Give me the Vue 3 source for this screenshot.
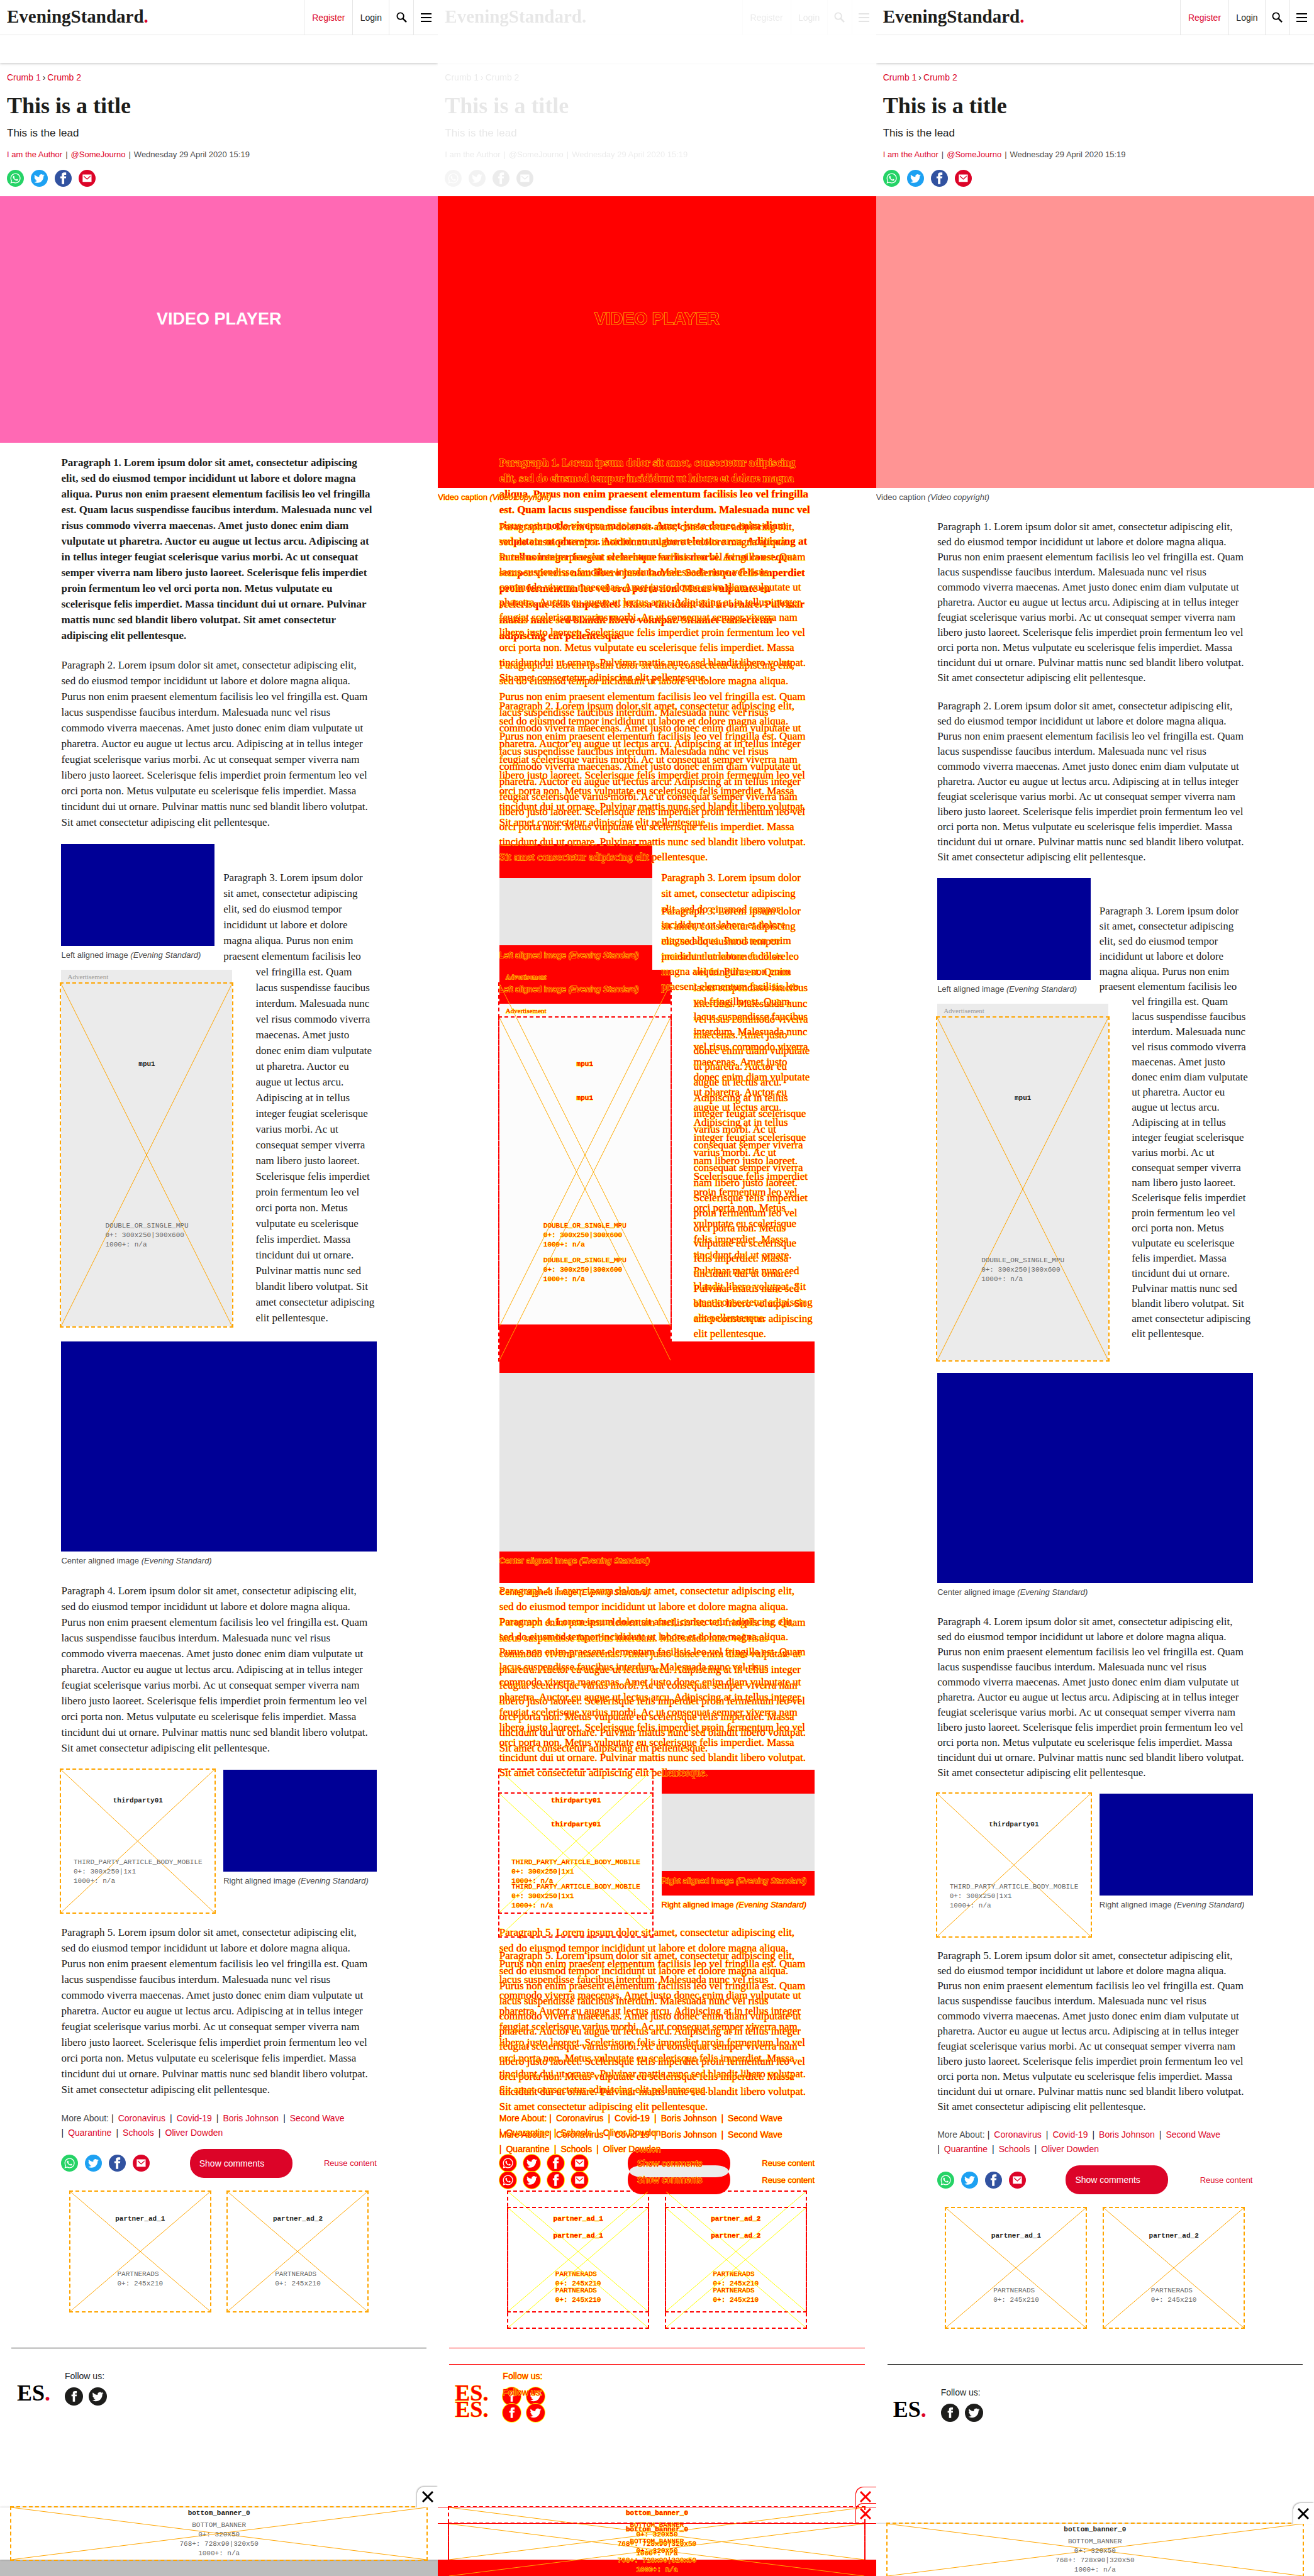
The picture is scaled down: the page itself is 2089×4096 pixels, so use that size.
<script setup>
const lorem =
  'Lorem ipsum dolor sit amet, consectetur adipiscing elit, sed do eiusmod tempor incididunt ut labore et dolore magna aliqua. Purus non enim praesent elementum facilisis leo vel fringilla est. Quam lacus suspendisse faucibus interdum. Malesuada nunc vel risus commodo viverra maecenas. Amet justo donec enim diam vulputate ut pharetra. Auctor eu augue ut lectus arcu. Adipiscing at in tellus integer feugiat scelerisque varius morbi. Ac ut consequat semper viverra nam libero justo laoreet. Scelerisque felis imperdiet proin fermentum leo vel orci porta non. Metus vulputate eu scelerisque felis imperdiet. Massa tincidunt dui ut ornare. Pulvinar mattis nunc sed blandit libero volutpat. Sit amet consectetur adipiscing elit pellentesque.'

const panels = [
  { name: 'baseline', layers: ['before'] },
  { name: 'diff', layers: ['before', 'after'] },
  { name: 'current', layers: ['after'] }
]

const tags = ['Coronavirus', 'Covid-19', 'Boris Johnson', 'Second Wave', 'Quarantine', 'Schools', 'Oliver Dowden']
const partners = ['partner_ad_1', 'partner_ad_2']

const twitter =
  'M23.953 4.57a10 10 0 01-2.825.775 4.958 4.958 0 002.163-2.723c-.951.555-2.005.959-3.127 1.184a4.92 4.92 0 00-8.384 4.482C7.69 8.095 4.067 6.13 1.64 3.162a4.822 4.822 0 00-.666 2.475c0 1.71.87 3.213 2.188 4.096a4.904 4.904 0 01-2.228-.616v.06a4.923 4.923 0 003.946 4.827 4.996 4.996 0 01-2.212.085 4.936 4.936 0 004.604 3.417 9.867 9.867 0 01-6.102 2.105c-.39 0-.779-.023-1.17-.067a13.995 13.995 0 007.557 2.209c9.053 0 13.998-7.496 13.998-13.985 0-.21 0-.42-.015-.63A9.935 9.935 0 0024 4.59z'
const facebook =
  'M9 8h-3v4h3v12h5v-12h3.642l.358-4h-4v-1.667c0-.955.192-1.333 1.115-1.333h2.885v-5h-3.808c-3.596 0-5.192 1.583-5.192 4.615v3.385z'
const whatsapp =
  'M.057 24l1.687-6.163c-1.041-1.804-1.588-3.849-1.587-5.946.003-6.556 5.338-11.891 11.893-11.891 3.181.001 6.167 1.24 8.413 3.488 2.245 2.248 3.481 5.236 3.48 8.414-.003 6.557-5.338 11.892-11.893 11.892-1.99-.001-3.951-.5-5.688-1.448l-6.305 1.654zm6.597-3.807c1.676.995 3.276 1.591 5.392 1.592 5.448 0 9.886-4.434 9.889-9.885.002-5.462-4.415-9.89-9.881-9.892-5.452 0-9.887 4.434-9.889 9.884-.001 2.225.651 3.891 1.746 5.634l-.999 3.648 3.742-.981zm11.387-5.464c-.074-.124-.272-.198-.57-.347-.297-.149-1.758-.868-2.031-.967-.272-.099-.47-.149-.669.149-.198.297-.768.967-.941 1.165-.173.198-.347.223-.644.074-.297-.149-1.255-.462-2.39-1.475-.883-.788-1.48-1.761-1.653-2.059-.173-.297-.018-.458.13-.606.134-.133.297-.347.446-.521.151-.172.2-.296.3-.495.099-.198.05-.372-.025-.521-.075-.148-.669-1.611-.916-2.206-.242-.579-.487-.501-.669-.51l-.57-.01c-.198 0-.52.074-.792.372s-1.04 1.016-1.04 2.479 1.065 2.876 1.213 3.074c.149.198 2.095 3.2 5.076 4.487.709.306 1.263.489 1.694.626.712.226 1.36.194 1.872.118.571-.085 1.758-.719 2.006-1.413.248-.695.248-1.29.173-1.414z'
const mail = 'M0 2h24v20H0z M3 5l9 8 9-8v3l-9 8-9-8z'

const shares = [
  { id: 'whatsapp', label: 'Share on WhatsApp', path: whatsapp, shift: 'translate(6.500 6.500) scale(.8)' },
  { id: 'twitter', label: 'Share on Twitter', path: twitter, shift: 'translate(6 6.500) scale(.83)' },
  { id: 'facebook', label: 'Share on Facebook', path: facebook, shift: 'translate(5 5) scale(.92)' },
  { id: 'mail', label: 'Share by email', path: mail, shift: 'translate(7.500 7.500) scale(.7)' }
]
const follows = [
  { id: 'dark', label: 'Facebook', path: facebook, shift: 'translate(7 6.500) scale(.78)' },
  { id: 'dark', label: 'Twitter', path: twitter, shift: 'translate(6 6.500) scale(.83)' }
]
</script>

<template>
  <main class="compare">
    <section v-for="panel in panels" :key="panel.name" class="panel" :class="panel.name">
      <div v-for="v in panel.layers" :key="v" class="layer" :class="v">
        <div class="top">
          <header>
            <div class="bar">
              <a href="#" class="logo">EveningStandard<span>.</span></a>
              <nav>
                <a href="#" class="cell">Register</a>
                <a href="#" class="cell login">Login</a>
                <button type="button" class="cell icon" aria-label="Search">
                  <svg width="17" height="17" viewBox="0 0 18 18" fill="none" stroke="currentColor">
                    <circle cx="7" cy="7" r="5.500" stroke-width="2" />
                    <path d="M11 11l6 6" stroke-width="2.500" />
                  </svg>
                </button>
                <button type="button" class="cell icon" aria-label="Menu">
                  <svg width="17" height="14" viewBox="0 0 17 14" stroke="currentColor" stroke-width="2">
                    <path d="M0 1h17M0 7h17M0 13h17" />
                  </svg>
                </button>
              </nav>
            </div>
          </header>
          <div class="intro">
            <div class="crumbs"><a href="#">Crumb 1</a><i>›</i><a href="#">Crumb 2</a></div>
            <h1>This is a title</h1>
            <div class="lead">This is the lead</div>
            <div class="byline">
              <a href="#">I am the Author</a><i>|</i><a href="#">@SomeJourno</a><i>|</i><span>Wednesday 29 April 2020 15:19</span>
            </div>
            <div class="shares">
              <a v-for="s in shares" :key="s.id" href="#" class="round" :class="s.id" :aria-label="s.label">
                <svg viewBox="0 0 32 32"><path :d="s.path" :transform="s.shift" fill="#fff" fill-rule="evenodd" /></svg>
              </a>
            </div>
          </div>
        </div>

        <div class="video"><span v-if="v === 'before'" class="ink">VIDEO PLAYER</span></div>
        <div v-if="v === 'after'" class="caption videocap ink">Video caption <em>(Video copyright)</em></div>

        <article>
          <p class="ink first">Paragraph 1. {{ lorem }}</p>
          <p class="ink">Paragraph 2. {{ lorem }}</p>
          <div class="wrap">
            <figure class="left">
              <div class="image"></div>
              <figcaption class="caption ink">Left aligned image <em>(Evening Standard)</em></figcaption>
            </figure>
            <aside class="mpu">
              <div class="adlabel ink">Advertisement</div>
              <div class="slot">
                <svg preserveAspectRatio="none" viewBox="0 0 100 100"><path d="M0 0L100 100M100 0L0 100" vector-effect="non-scaling-stroke" /></svg>
                <strong class="ink">mpu1</strong>
                <pre class="ink">DOUBLE_OR_SINGLE_MPU
0+: 300x250|300x600
1000+: n/a</pre>
              </div>
            </aside>
            <p class="ink">Paragraph 3. {{ lorem }}</p>
          </div>
          <figure class="center">
            <div class="image"></div>
            <figcaption class="caption ink">Center aligned image <em>(Evening Standard)</em></figcaption>
          </figure>
          <p class="ink">Paragraph 4. {{ lorem }}</p>
          <div class="pair">
            <div class="slot">
              <svg preserveAspectRatio="none" viewBox="0 0 100 100"><path d="M0 0L100 100M100 0L0 100" vector-effect="non-scaling-stroke" /></svg>
              <strong class="ink">thirdparty01</strong>
              <pre class="ink">THIRD_PARTY_ARTICLE_BODY_MOBILE
0+: 300x250|1x1
1000+: n/a</pre>
            </div>
            <figure class="right">
              <div class="image"></div>
              <figcaption class="caption ink">Right aligned image <em>(Evening Standard)</em></figcaption>
            </figure>
          </div>
          <p class="ink">Paragraph 5. {{ lorem }}</p>

          <ul class="tags ink">
            <li class="about"><span>More About:</span></li>
            <li v-for="t in tags" :key="t"><i>|</i><a href="#">{{ t }}</a></li>
          </ul>
          <div class="actions">
            <div class="shares">
              <a v-for="s in shares" :key="s.id" href="#" class="round" :class="s.id" :aria-label="s.label">
                <svg viewBox="0 0 32 32"><path :d="s.path" :transform="s.shift" fill="#fff" fill-rule="evenodd" /></svg>
              </a>
            </div>
            <button type="button" class="comments"><span class="ink">Show comments</span></button>
            <a href="#" class="reuse ink">Reuse content</a>
          </div>
          <div class="partners">
            <div v-for="p in partners" :key="p" class="slot">
              <svg preserveAspectRatio="none" viewBox="0 0 100 100"><path d="M0 0L100 100M100 0L0 100" vector-effect="non-scaling-stroke" /></svg>
              <strong class="ink">{{ p }}</strong>
              <pre class="ink">PARTNERADS
0+: 245x210</pre>
            </div>
          </div>
        </article>

        <footer>
          <a href="#" class="es ink">ES<span>.</span></a>
          <div class="follow">
            <div class="ink">Follow us:</div>
            <div class="followicons">
              <a v-for="f in follows" :key="f.label" href="#" class="round" :class="f.id" :aria-label="f.label">
                <svg viewBox="0 0 32 32"><path :d="f.path" :transform="f.shift" fill="#fff" /></svg>
              </a>
            </div>
          </div>
        </footer>

        <div class="banner">
          <button type="button" class="close" aria-label="Close">
            <svg width="18" height="18" viewBox="0 0 18 18" stroke="currentColor" stroke-width="3"><path d="M1 1l16 16M17 1L1 17" /></svg>
          </button>
          <div class="slot">
            <svg preserveAspectRatio="none" viewBox="0 0 100 100"><path d="M0 0L100 100M100 0L0 100" vector-effect="non-scaling-stroke" /></svg>
            <strong class="ink">bottom_banner_0</strong>
            <pre class="ink">BOTTOM_BANNER
0+: 320x50
768+: 728x90|320x50
1000+: n/a</pre>
          </div>
        </div>
        <div class="filler"></div>
      </div>
    </section>
  </main>
</template>

<style>
body {
  margin: 0;
  background: #fff;
}
</style>

<style scoped>
.compare {
  display: grid;
  grid-template-columns: repeat(3, minmax(0, 1fr));
  font-family: 'Liberation Sans', Arial, sans-serif;
  color: #1d1d1b;
  overflow: hidden;
}
.panel {
  display: grid;
  overflow: hidden;
}
.layer {
  grid-area: 1 / 1;
  min-width: 0;
  display: flex;
  flex-direction: column;
  --line: 25px;
  --gap: 22px;
}
.after {
  --line: 24px;
  --gap: 21px;
}
a {
  color: #dc0428;
  text-decoration: none;
}
button {
  font: inherit;
  border: 0;
  background: none;
  color: #000;
  padding: 0;
}
i {
  font-style: normal;
}

header {
  height: 100px;
  box-shadow: 0 1px 4px rgba(0, 0, 0, 0.25);
}
.bar {
  display: flex;
  justify-content: space-between;
  height: 55px;
  border-bottom: 1px solid #e6e6e6;
}
.logo {
  font: bold 29px/52px 'Liberation Serif', 'Times New Roman', serif;
  color: #1d1d1b;
  padding-left: 11px;
}
.logo span,
.es span {
  color: #dc0428;
}
nav {
  display: flex;
  font-size: 14px;
}
.cell {
  display: flex;
  align-items: center;
  justify-content: center;
  box-sizing: border-box;
  border-left: 1px solid #e6e6e6;
  width: 77px;
}
.cell.login {
  width: 58px;
  color: #1d1d1b;
}
.cell.icon {
  width: 39px;
}
.intro {
  padding: 13px 11px 15px;
}
.crumbs {
  display: flex;
  gap: 3px;
  font-size: 14px;
  line-height: 20px;
}
h1 {
  margin: 13px 0 10px;
  font: bold 36px/44px 'Liberation Serif', 'Times New Roman', serif;
}
.lead {
  font-size: 17px;
  line-height: 24px;
}
.byline {
  margin: 12px 0 14px;
  display: flex;
  gap: 5px;
  font-size: 13px;
  line-height: 20px;
  color: #4a4a4a;
}
.shares {
  display: flex;
  gap: 11px;
}
.round {
  width: 27px;
  height: 27px;
  border-radius: 50%;
}
.round svg {
  display: block;
  width: 100%;
  height: 100%;
}
.whatsapp { background: #25d366; }
.twitter { background: #1da1f2; }
.facebook { background: #3152a0; }
.mail { background: #dc0428; }
.dark { background: #1d1d1b; }

.video {
  display: flex;
  align-items: center;
  justify-content: center;
  aspect-ratio: 16 / 9;
  background: #ff69b4;
  color: #fff;
  font-size: 27px;
  font-weight: bold;
}
.after .video {
  aspect-ratio: 3 / 2;
  background: #ff9494;
}
.caption {
  padding-top: 7px;
  font-size: 13px;
  line-height: 16px;
  color: #4a4a4a;
}
.videocap {
  padding-bottom: 8px;
}

article {
  padding: 19px 14% 0;
}
p {
  margin: 0 0 var(--gap);
  padding-right: 12px;
  font: 17px/var(--line) 'Liberation Serif', 'Times New Roman', serif;
}
.before .first {
  padding-right: 5px;
  font-weight: bold;
}
figure {
  margin: 0;
}
.image {
  background: #000096;
  aspect-ratio: 3 / 2;
}
.wrap {
  display: flow-root;
  padding-bottom: 24px;
}
.after .wrap {
  padding-bottom: 20px;
}
.wrap p {
  margin: 0;
  padding: 41px 3px 0 0;
}
.left {
  float: left;
  width: calc(50% - 7px);
  height: 200px;
  padding-right: 14px;
}
.left .image,
.right .image {
  height: 162px;
  aspect-ratio: auto;
}
.mpu {
  float: left;
  clear: left;
  width: 272px;
  margin-right: 37px;
  background: #ebebeb;
}
.adlabel {
  padding-left: 10px;
  font: 11px/22px 'Liberation Serif', 'Times New Roman', serif;
  color: #9a9a9a;
}
.slot {
  position: relative;
  display: flex;
  flex-direction: column;
  align-items: center;
  justify-content: space-around;
  outline: 2px dashed #ffa500;
  font: 11px/15px 'Liberation Mono', 'Courier New', monospace;
}
.slot svg {
  position: absolute;
  inset: 0;
  width: 100%;
  height: 100%;
}
.slot path {
  stroke: #ffa500;
  stroke-width: 1px;
}
.slot strong,
.slot pre {
  position: relative;
}
.slot strong {
  text-shadow: 0 0 2px #fff;
}
.slot pre {
  margin: 0;
  font: inherit;
  color: #666;
}
.mpu .slot {
  height: 545px;
}
.center {
  margin-bottom: 27px;
}
.pair {
  display: flex;
  justify-content: space-between;
  margin-bottom: 19px;
}
.pair > * {
  width: calc(50% - 7px);
}
.pair .slot {
  height: 227px;
}

.tags {
  display: flex;
  flex-wrap: wrap;
  margin: 0 0 14px;
  padding: 0;
  list-style: none;
  font-size: 14px;
  line-height: 23px;
}
.tags li {
  margin-right: 7px;
}
.tags .about {
  margin-right: 4px;
}
.about span {
  color: #4a4a4a;
}
.tags i {
  margin-right: 7px;
}
.actions {
  display: flex;
  align-items: center;
  justify-content: space-between;
  height: 46px;
  margin-bottom: 22px;
}
.actions .shares {
  width: 154px;
}
.comments {
  position: relative;
  width: 163px;
  height: 46px;
  padding-left: 15px;
  border-radius: 22px;
  background: #dc0428;
  color: #fff;
  font-size: 14px;
  text-align: left;
}
.reuse {
  font-size: 13px;
}
.partners {
  display: flex;
  justify-content: space-around;
}
.partners .slot {
  width: 222px;
  height: 190px;
}

footer {
  display: flex;
  margin: 58px 18px 0;
  padding: 35px 9px 162px;
  border-top: 1px solid #1d1d1b;
}
.es {
  margin-top: 17px;
  width: 76px;
  font: bold 36px/38px 'Liberation Serif', 'Times New Roman', serif;
  color: #000;
}
.follow {
  font-size: 14px;
  line-height: 18px;
}
.followicons {
  display: flex;
  gap: 9px;
  margin-top: 9px;
}
.followicons .round {
  width: 29px;
  height: 29px;
}

.banner {
  position: relative;
  background: #fff;
  box-shadow: 0 0 3px rgba(0, 0, 0, 0.3);
}
.banner .slot {
  max-width: 660px;
  height: 83px;
  margin: 0 auto;
  text-align: center;
}
.close {
  position: absolute;
  z-index: 2;
  right: 0;
  bottom: 100%;
  display: flex;
  align-items: center;
  justify-content: center;
  width: 33px;
  height: 33px;
  border-radius: 12px 0 0 0;
  background: #fff;
  box-shadow: -1px -1px 2px rgba(0, 0, 0, 0.3);
}
.filler {
  flex: 1;
  background: #bdbdbd;
}

/* Diff panel: unchanged parts are faded, changed ones are red with a yellow edge */
.diff .top {
  filter: grayscale(1);
  opacity: 0.1;
}
.diff .after .top {
  visibility: hidden;
}
.diff .video,
.diff .image,
.diff .mpu,
.diff .comments,
.diff .filler {
  background: #f00;
}
.diff .ink,
.diff .ink a,
.diff .ink span {
  color: #f00;
  text-shadow: none;
  -webkit-text-stroke: 1px #ff0;
  paint-order: stroke fill;
}
.diff .ink {
  position: relative;
  z-index: 1;
}
.diff .after .left .image {
  background: linear-gradient(#e6e6e6 66%, #f00 66%);
}
.diff .after .center .image {
  background: linear-gradient(#e6e6e6 85%, #f00 85%);
}
.diff .after .right .image {
  background: linear-gradient(#e6e6e6 76%, #f00 76%);
}
.diff .after .mpu {
  background: linear-gradient(#fcfcfc 90%, #f00 90%);
}
.diff .slot {
  z-index: 1;
  outline-color: #f00;
}
.diff .slot path {
  stroke: #ff0;
}
.diff .mpu .slot path,
.diff .banner .slot path {
  stroke: #fa0;
}
.diff article .round,
.diff footer .round {
  background: #f00;
  box-shadow: 0 0 0 1px #ff0;
}
.diff .after .comments::before {
  content: '';
  position: absolute;
  inset: 0 3px auto;
  height: 19px;
  border-radius: 22px / 10px;
  background: #ececec;
}
.diff footer {
  border-color: #f00;
}
.diff .banner {
  background: none;
  box-shadow: 0 -1px 0 #f00;
}
.diff .close {
  background: none;
  color: #f00;
  box-shadow: inset 1px 1px 0 #f00;
}
</style>
